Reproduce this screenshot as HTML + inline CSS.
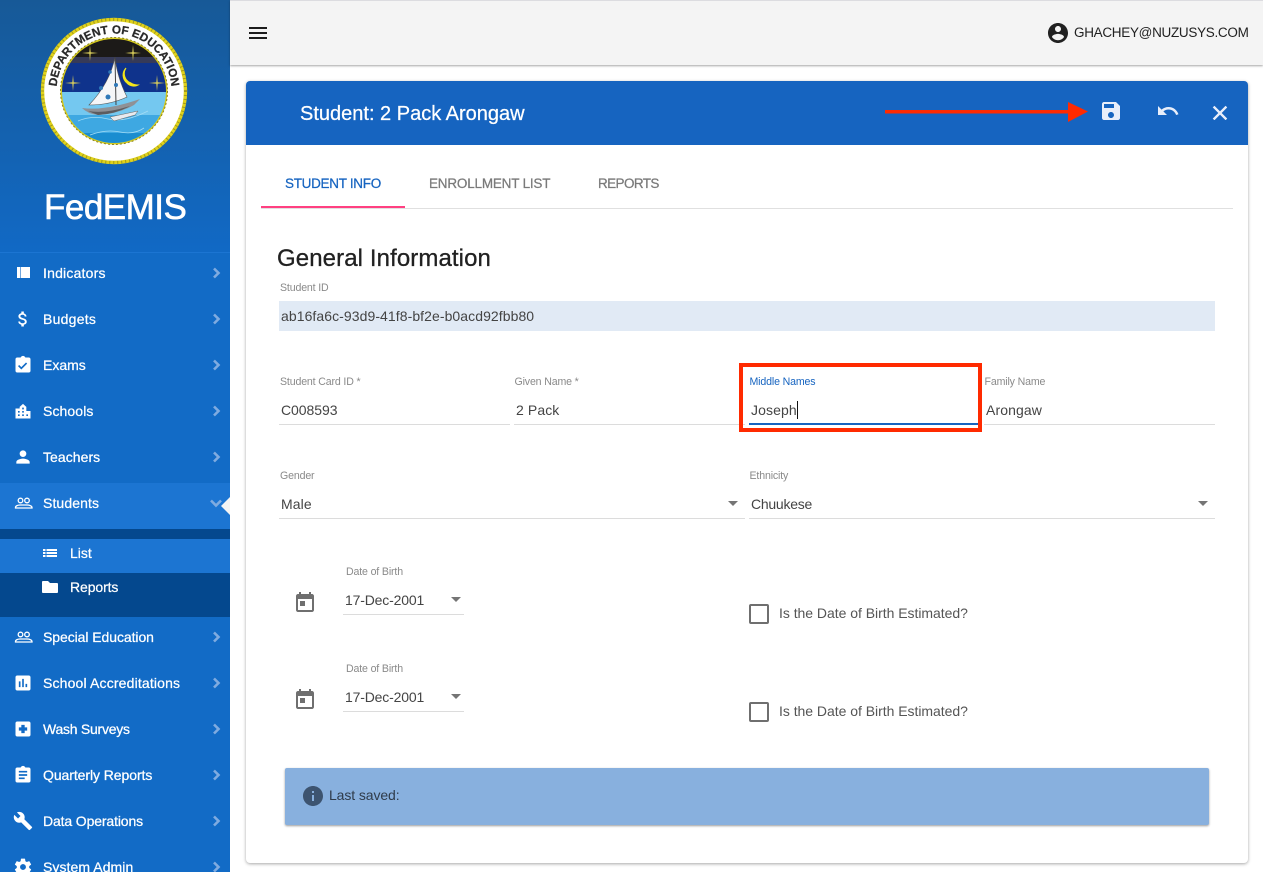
<!DOCTYPE html>
<html><head><meta charset="utf-8"><style>
html,body{margin:0;padding:0;width:1263px;height:872px;overflow:hidden;background:#fff;font-family:"Liberation Sans",sans-serif;color:#333}
.a{position:absolute}
.t{position:absolute;white-space:nowrap;line-height:1}
#side{left:0;top:0;width:230px;height:872px;background:#126bc6;overflow:hidden}
.nav{position:absolute;left:43px;color:#fff;font-size:14px;line-height:16px;white-space:nowrap;letter-spacing:0;-webkit-text-stroke:.25px #fff}
.ic{position:absolute;left:14px;width:20px;height:20px;fill:#fff}
.ch{position:absolute;left:209px;width:14px;height:14px;fill:none;stroke:#7fabe0;stroke-width:2.6}
.lb{position:absolute;font-size:10.6px;color:#8a8a8a;line-height:12px;white-space:nowrap;letter-spacing:-.15px}
.v{position:absolute;font-size:14px;color:#444;line-height:16px;white-space:nowrap;letter-spacing:.1px}
.u{position:absolute;height:1px;background:#dcdcdc}
.ar{position:absolute;width:0;height:0;border-left:5px solid transparent;border-right:5px solid transparent;border-top:5px solid #757575}
.cb{position:absolute;left:749px;width:16px;height:16px;border:2px solid #6f6f6f;border-radius:2px}
.tab{position:absolute;white-space:nowrap;font-size:13.5px;line-height:16px;color:#7a7a7a;-webkit-text-stroke:.25px currentColor}
</style></head><body>
<div id="side" class="a">
<div class="a" style="left:0;top:0;width:230px;height:252px;background:linear-gradient(#175997,#1169c5)"></div>
<div class="a" style="left:0;top:252px;width:230px;height:1px;background:#1c75d2"></div>
<svg class="a" style="left:38px;top:15px" width="152" height="152" viewBox="0 0 152 152">
<defs>
<path id="tp" d="M76 133.500A57.500 57.500 0 1 1 76.010 133.500"/>
<path id="bp" d="M76 8.500A67.500 67.500 0 1 0 75.990 8.500"/>
<clipPath id="c"><circle cx="76" cy="76" r="52"/></clipPath>
</defs>
<circle cx="76" cy="76" r="71.500" fill="#fff" stroke="#e0d21a" stroke-width="3.400"/>
<circle cx="76" cy="76" r="71.500" fill="none" stroke="#7f7a22" stroke-width="3" stroke-dasharray="1 3" opacity=".65"/>
<circle cx="76" cy="76" r="53.500" fill="#d7cb1e" stroke="#8a8420" stroke-width="1" stroke-dasharray="2 2"/>
<g clip-path="url(#c)">
<rect x="20" y="20" width="112" height="22" fill="#1c1a18"/>
<rect x="20" y="42" width="112" height="6" fill="#363a58"/>
<rect x="20" y="48" width="112" height="30" fill="#0f338c"/>
<rect x="20" y="77" width="112" height="60" fill="#74c8f0"/>
<rect x="20" y="100" width="112" height="20" fill="#3ea8e2"/>
<rect x="20" y="118" width="112" height="20" fill="#1a8dd0"/>
<path d="M40 106q14-6 30-2t40-8M52 120q16-6 30-3t24-4" fill="none" stroke="#a3dcf5" stroke-width=".8"/>
<g fill="#d9cd5a"><path d="M52 30l.7 7.300 7.300.7-7.300.7-.7 7.300-.7-7.300-7.300-.7 7.300-.7z"/><path d="M95 30l.7 7.300 7.300.7-7.300.7-.7 7.300-.7-7.300-7.300-.7 7.300-.7z"/><path d="M35 60l.7 7.300 7.300.7-7.300.7-.7 7.300-.7-7.300-7.300-.7 7.300-.7z"/><path d="M119 60l.7 7.300 7.300.7-7.300.7-.7 7.300-.7-7.300-7.300-.7 7.300-.7z"/></g>
<path d="M88 53a10 10 0 0 0 1 15a9 9 0 0 0 11 2a14 14 0 0 1-7-2a10 10 0 0 1-5-15z" fill="#f3e61a" stroke="#f3e61a" stroke-width="1"/>
<path d="M77 42Q72 68 51 90Q72 90 89 82Q79 62 77 42z" fill="#f5f6f8" stroke="#555" stroke-width=".6"/>
<path d="M77 42l1 48" stroke="#444" stroke-width="1"/>
<path d="M44 93Q68 96 102 84L96 90Q80 99 60 100Q50 99 44 93z" fill="#8f9196"/>
<path d="M50 96Q68 99 92 91Q78 99 60 100z" fill="#5c5c60"/>
<path d="M72 102L100 96L97 100L76 106z" fill="#e8eaee" stroke="#666" stroke-width=".5"/>
<g fill="#2f78b8"><circle cx="72" cy="57" r="1.800"/><circle cx="63" cy="73" r="2"/><circle cx="78" cy="70" r="2"/><circle cx="70" cy="82" r="2.500"/></g>
</g>
<text font-family="Liberation Sans,sans-serif" font-size="11.700" font-weight="700" fill="#2a2a2a" stroke="#2a2a2a" stroke-width=".25"><textPath href="#tp" startOffset="50%" text-anchor="middle">DEPARTMENT OF EDUCATION</textPath></text>
<text font-family="Liberation Sans,sans-serif" font-size="11.700" font-weight="700" fill="#2a2a2a" stroke="#2a2a2a" stroke-width=".25"><textPath href="#bp" startOffset="50%" text-anchor="middle">NATIONAL GOVERNMENT</textPath></text>
</svg>
<div class="t" style="left:44px;top:188px;font-size:35px;line-height:40px;color:#fff;letter-spacing:-.5px;-webkit-text-stroke:.6px #fff">FedEMIS</div>

<div class="a" style="left:0;top:483px;width:230px;height:46px;background:#1c75d2"></div>
<div class="a" style="left:0;top:529px;width:230px;height:88px;background:#04488e"></div>
<div class="a" style="left:0;top:539px;width:230px;height:34px;background:#1c75d2"></div>
<div class="a" style="left:221px;top:497px;width:0;height:0;border-top:9px solid transparent;border-bottom:9px solid transparent;border-right:9px solid #f4f4f4"></div>

<svg class="ic" style="top:263px" viewBox="0 0 20 20"><path d="M3 4h3v11H3zM6.600 4H16v11H6.600z"/></svg>
<div class="nav" style="top:265px;letter-spacing:.2px">Indicators</div>
<svg class="ic" style="top:309px;left:13px" viewBox="0 0 24 24"><path d="M11.800 10.900c-2.270-.59-3-1.200-3-2.150 0-1.090 1.010-1.850 2.700-1.850 1.780 0 2.440.85 2.500 2.100h2.210c-.07-1.720-1.120-3.300-3.210-3.810V3h-3v2.160c-1.940.42-3.500 1.680-3.500 3.610 0 2.310 1.910 3.460 4.700 4.130 2.500.6 3 1.480 3 2.410 0 .69-.49 1.790-2.700 1.790-2.060 0-2.870-.92-2.980-2.100h-2.200c.12 2.190 1.760 3.420 3.680 3.830V21h3v-2.150c1.950-.37 3.500-1.500 3.500-3.550 0-2.840-2.430-3.810-4.700-4.400z"/></svg>
<div class="nav" style="top:311px;letter-spacing:.25px">Budgets</div>
<svg class="ic" style="top:355px;left:13px" viewBox="0 0 24 24"><path d="M19 3h-4.180C14.400 1.840 13.300 1 12 1s-2.400.84-2.820 2H5c-1.100 0-2 .9-2 2v14c0 1.100.9 2 2 2h14c1.100 0 2-.9 2-2V5c0-1.100-.9-2-2-2zm-2 7.400l-7 7-4-4 1.400-1.400 2.600 2.600 5.600-5.600z"/></svg>
<div class="nav" style="top:357px">Exams</div>
<svg class="ic" style="top:401px;left:13px" viewBox="0 0 24 24" fill-rule="evenodd"><path d="M3 21V9h5V7l4-3.500L16 7v5h5v9zM6 12v2h2v-2zm0 4v2h2v-2zm5-8v2h2V8zm0 4v2h2v-2zm0 4v2h2v-2zm5 0v2h2v-2z"/></svg>
<div class="nav" style="top:403px;letter-spacing:.1px">Schools</div>
<svg class="ic" style="top:447px;left:13px" viewBox="0 0 24 24"><path d="M12 12c2.210 0 4-1.790 4-4s-1.790-4-4-4-4 1.790-4 4 1.790 4 4 4zm0 2c-2.670 0-8 1.340-8 4v2h16v-2c0-2.660-5.330-4-8-4z"/></svg>
<div class="nav" style="top:449px;letter-spacing:.05px">Teachers</div>
<svg class="a" style="left:14px;top:496px" width="20" height="14" viewBox="0 0 20 14"><g fill="none" stroke="#fff" stroke-width="1.300"><circle cx="6.500" cy="4.500" r="2.300"/><circle cx="13" cy="4.500" r="2.300"/><path d="M1.500 11.500c0-1.500 2-2.500 4.500-2.500h7c2.500 0 5 1 5 2.500v.5H1.500z"/></g></svg>
<div class="nav" style="top:495px;letter-spacing:.1px">Students</div>
<svg class="a" style="left:42px;top:545px;fill:#fff" width="16" height="16" viewBox="0 0 16 16"><path d="M1 4h2.500v2H1zM4.500 4H15v2H4.500zM1 7h2.500v2H1zM4.500 7H15v2H4.500zM1 10h2.500v2H1zM4.500 10H15v2H4.500z"/></svg>
<div class="nav" style="left:70px;top:545px">List</div>
<svg class="a" style="left:41px;top:578px;fill:#fff" width="18" height="18" viewBox="0 0 18 18"><path d="M1 4c0-.6.4-1 1-1h5l2 2h7c.6 0 1 .4 1 1v8c0 .6-.4 1-1 1H2c-.6 0-1-.4-1-1z"/></svg>
<div class="nav" style="left:70px;top:579px;letter-spacing:-.1px">Reports</div>
<svg class="a" style="left:14px;top:630px" width="20" height="14" viewBox="0 0 20 14"><g fill="none" stroke="#fff" stroke-width="1.300"><circle cx="6.500" cy="4.500" r="2.300"/><circle cx="13" cy="4.500" r="2.300"/><path d="M1.500 11.500c0-1.500 2-2.500 4.500-2.500h7c2.500 0 5 1 5 2.500v.5H1.500z"/></g></svg>
<div class="nav" style="top:629px;letter-spacing:-.07px">Special Education</div>
<svg class="ic" style="top:673px;left:13px" viewBox="0 0 24 24"><path d="M19 3H5c-1.100 0-2 .9-2 2v14c0 1.100.9 2 2 2h14c1.100 0 2-.9 2-2V5c0-1.100-.9-2-2-2zM9 17H7v-7h2zm4 0h-2V7h2zm4 0h-2v-4h2z"/></svg>
<div class="nav" style="top:675px;letter-spacing:.16px">School Accreditations</div>
<svg class="ic" style="top:719px;left:13px" viewBox="0 0 24 24"><path d="M19 3H5c-1.100 0-2 .9-2 2v14c0 1.100.9 2 2 2h14c1.100 0 2-.9 2-2V5c0-1.100-.9-2-2-2zm-2 11h-3v3h-4v-3H7v-4h3V7h4v3h3z"/></svg>
<div class="nav" style="top:721px;letter-spacing:-.25px">Wash Surveys</div>
<svg class="ic" style="top:765px;left:13px" viewBox="0 0 24 24"><path d="M19 3h-4.180C14.400 1.840 13.300 1 12 1s-2.400.84-2.820 2H5c-1.100 0-2 .9-2 2v14c0 1.100.9 2 2 2h14c1.100 0 2-.9 2-2V5c0-1.100-.9-2-2-2zm-5 14H7v-2h7zm3-4H7v-2h10zm0-4H7V7h10z"/></svg>
<div class="nav" style="top:767px;letter-spacing:-.07px">Quarterly Reports</div>
<svg class="ic" style="top:811px;left:13px" viewBox="0 0 24 24"><path d="M22.700 19l-9.100-9.100c.9-2.300.4-5-1.500-6.900-2-2-5-2.400-7.400-1.300L9 6 6 9 1.600 4.700C.4 7.100.9 10.100 2.900 12.100c1.900 1.900 4.600 2.400 6.900 1.500l9.100 9.100c.4.400 1 .4 1.400 0l2.300-2.300c.5-.4.5-1.100.1-1.400z"/></svg>
<div class="nav" style="top:813px;letter-spacing:-.13px">Data Operations</div>
<svg class="ic" style="top:857px;left:13px" viewBox="0 0 24 24"><path d="M19.430 12.980c.04-.32.07-.64.07-.98s-.03-.66-.07-.98l2.110-1.650c.19-.15.24-.42.12-.64l-2-3.460c-.12-.22-.39-.3-.61-.22l-2.490 1c-.52-.4-1.080-.73-1.690-.98l-.38-2.650C14.460 2.180 14.250 2 14 2h-4c-.25 0-.46.18-.49.42l-.38 2.650c-.61.25-1.170.59-1.690.98l-2.490-1c-.23-.09-.49 0-.61.22l-2 3.460c-.13.22-.07.49.12.64l2.110 1.650c-.04.32-.07.65-.07.98s.03.66.07.98l-2.110 1.650c-.19.15-.24.42-.12.64l2 3.460c.12.22.39.3.61.22l2.490-1c.52.4 1.080.73 1.690.98l.38 2.650c.03.24.24.42.49.42h4c.25 0 .46-.18.49-.42l.38-2.650c.61-.25 1.170-.59 1.690-.98l2.490 1c.23.09.49 0 .61-.22l2-3.460c.12-.22.07-.49-.12-.64zM12 15.500c-1.930 0-3.500-1.570-3.500-3.500s1.570-3.500 3.500-3.500 3.500 1.570 3.500 3.500-1.570 3.500-3.500 3.500z"/></svg>
<div class="nav" style="top:859px;letter-spacing:.07px">System Admin</div>

<svg class="ch" style="top:266px" viewBox="0 0 14 14"><path d="M5 2.500L9.500 7 5 11.500"/></svg>
<svg class="ch" style="top:312px" viewBox="0 0 14 14"><path d="M5 2.500L9.500 7 5 11.500"/></svg>
<svg class="ch" style="top:358px" viewBox="0 0 14 14"><path d="M5 2.500L9.500 7 5 11.500"/></svg>
<svg class="ch" style="top:404px" viewBox="0 0 14 14"><path d="M5 2.500L9.500 7 5 11.500"/></svg>
<svg class="ch" style="top:450px" viewBox="0 0 14 14"><path d="M5 2.500L9.500 7 5 11.500"/></svg>
<svg class="ch" style="top:496px" viewBox="0 0 14 14"><path d="M2 4.500l5 5 5-5"/></svg>
<svg class="ch" style="top:630px" viewBox="0 0 14 14"><path d="M5 2.500L9.500 7 5 11.500"/></svg>
<svg class="ch" style="top:676px" viewBox="0 0 14 14"><path d="M5 2.500L9.500 7 5 11.500"/></svg>
<svg class="ch" style="top:722px" viewBox="0 0 14 14"><path d="M5 2.500L9.500 7 5 11.500"/></svg>
<svg class="ch" style="top:768px" viewBox="0 0 14 14"><path d="M5 2.500L9.500 7 5 11.500"/></svg>
<svg class="ch" style="top:814px" viewBox="0 0 14 14"><path d="M5 2.500L9.500 7 5 11.500"/></svg>
<svg class="ch" style="top:860px" viewBox="0 0 14 14"><path d="M5 2.500L9.500 7 5 11.500"/></svg>
</div>

<!-- top bar -->
<div class="a" style="left:230px;top:0;width:1033px;height:65px;background:#f4f4f4;border-top:1px solid #dcdce0;box-sizing:border-box;box-shadow:0 1px 2px rgba(0,0,0,.35)"></div>
<svg class="a" style="left:248px;top:25px" width="20" height="16" viewBox="0 0 20 16"><path d="M1 2h18v2H1zM1 7h18v2H1zM1 12h18v2H1z" fill="#1c1c1c"/></svg>
<svg class="a" style="left:1046px;top:21px" width="24" height="24" viewBox="0 0 24 24"><path fill="#212121" d="M12 2C6.480 2 2 6.480 2 12s4.480 10 10 10 10-4.480 10-10S17.520 2 12 2zm0 3c1.660 0 3 1.340 3 3s-1.340 3-3 3-3-1.340-3-3 1.340-3 3-3zm0 14.200c-2.500 0-4.710-1.280-6-3.220.03-1.990 4-3.080 6-3.080s5.970 1.090 6 3.080c-1.290 1.940-3.500 3.220-6 3.220z"/></svg>
<div class="t" style="left:1074px;top:25px;font-size:13.5px;line-height:16px;color:#212121;letter-spacing:-.3px">GHACHEY@NUZUSYS.COM</div>

<!-- card -->
<div class="a" style="left:246px;top:81px;width:1002px;height:782px;background:#fff;border-radius:4px;box-shadow:0 1px 3px rgba(0,0,0,.35)"></div>
<div class="a" style="left:246px;top:81px;width:1002px;height:64px;background:#1664c0;border-radius:4px 4px 0 0"></div>
<div class="t" style="left:300px;top:103px;font-size:20px;line-height:23px;color:#fff;letter-spacing:0;-webkit-text-stroke:.25px #fff">Student: 2 Pack Arongaw</div>
<svg class="a" style="left:885px;top:100px" width="205" height="24" viewBox="0 0 205 24"><path d="M0 10h184v3.500H0z" fill="#ff2a00"/><path d="M183 2L203 11.500L183 22z" fill="#ff2a00"/></svg>
<svg class="a" style="left:1099px;top:99px" width="24" height="24" viewBox="0 0 24 24"><path fill="#e8eefa" d="M17 3H5c-1.110 0-2 .9-2 2v14c0 1.100.89 2 2 2h14c1.100 0 2-.9 2-2V7zm-5 16c-1.660 0-3-1.340-3-3s1.340-3 3-3 3 1.340 3 3-1.340 3-3 3zm3-10H5V5h10z"/></svg>
<svg class="a" style="left:1156px;top:99px" width="24" height="24" viewBox="0 0 24 24"><path fill="#e8eefa" d="M12.500 8c-2.650 0-5.050.99-6.900 2.600L2 7v9h9l-3.620-3.620c1.390-1.160 3.160-1.880 5.120-1.880 3.540 0 6.550 2.310 7.600 5.500l2.370-.78C21.080 11.030 17.150 8 12.500 8z"/></svg>
<svg class="a" style="left:1208px;top:101px" width="24" height="24" viewBox="0 0 24 24"><path fill="#e8eefa" stroke="#e8eefa" stroke-width=".5" d="M19 6.410L17.590 5 12 10.590 6.410 5 5 6.410 10.590 12 5 17.590 6.410 19 12 13.410 17.590 19 19 17.590 13.410 12z"/></svg>

<!-- tabs -->
<div class="tab" style="left:285px;top:176px;color:#1664c0;letter-spacing:-.3px">STUDENT INFO</div>
<div class="tab" style="left:429px;top:176px;letter-spacing:-.2px">ENROLLMENT LIST</div>
<div class="tab" style="left:598px;top:176px;letter-spacing:-.6px">REPORTS</div>
<div class="a" style="left:261px;top:208px;width:972px;height:1px;background:#e0e0e0"></div>
<div class="a" style="left:261px;top:206px;width:144px;height:2px;background:#ff4081"></div>

<div class="t" style="left:277px;top:245px;font-size:24px;line-height:28px;color:#212121;letter-spacing:.1px;-webkit-text-stroke:.3px #212121">General Information</div>
<div class="lb" style="left:280px;top:282px">Student ID</div>
<div class="a" style="left:279px;top:301px;width:936px;height:30px;background:#e1eaf5"></div>
<div class="v" style="left:281px;top:308px;letter-spacing:.07px">ab16fa6c-93d9-41f8-bf2e-b0acd92fbb80</div>

<div class="lb" style="left:280px;top:376px">Student Card ID *</div>
<div class="v" style="left:281px;top:402px;letter-spacing:-.05px">C008593</div>
<div class="u" style="left:279px;top:424px;width:231px"></div>
<div class="lb" style="left:514.500px;top:376px">Given Name *</div>
<div class="v" style="left:516px;top:402px">2 Pack</div>
<div class="u" style="left:514px;top:424px;width:231px"></div>
<div class="lb" style="left:749.500px;top:376px;color:#1664c0">Middle Names</div>
<div class="v" style="left:751px;top:402px">Joseph</div>
<div class="a" style="left:797px;top:401px;width:1px;height:18px;background:#111"></div>
<div class="a" style="left:749px;top:423px;width:229px;height:2px;background:#1664c0"></div>
<div class="a" style="left:739px;top:363px;width:243px;height:69px;box-sizing:border-box;border:4px solid #ff2a00"></div>
<div class="lb" style="left:984.500px;top:376px">Family Name</div>
<div class="v" style="left:986px;top:402px">Arongaw</div>
<div class="u" style="left:984px;top:424px;width:231px"></div>

<div class="lb" style="left:280px;top:470px">Gender</div>
<div class="v" style="left:281px;top:496px">Male</div>
<div class="ar" style="left:728px;top:501px"></div>
<div class="u" style="left:279px;top:518px;width:466px"></div>
<div class="lb" style="left:749.500px;top:470px">Ethnicity</div>
<div class="v" style="left:751px;top:496px;letter-spacing:-.25px">Chuukese</div>
<div class="ar" style="left:1198px;top:501px"></div>
<div class="u" style="left:749px;top:518px;width:466px"></div>

<svg class="a" style="left:293px;top:591px" width="24" height="24" viewBox="0 0 24 24"><path fill="#6f6f6f" d="M19 3h-1V1h-2v2H8V1H6v2H5c-1.110 0-2 .9-2 2v14c0 1.100.89 2 2 2h14c1.100 0 2-.9 2-2V5c0-1.100-.9-2-2-2zm0 16H5V8h14zM7 10h5v5H7z"/></svg>
<div class="lb" style="left:346px;top:566px">Date of Birth</div>
<div class="v" style="left:345px;top:592px;letter-spacing:-.17px">17-Dec-2001</div>
<div class="ar" style="left:451px;top:597px"></div>
<div class="u" style="left:343px;top:614px;width:121px"></div>

<svg class="a" style="left:293px;top:688px" width="24" height="24" viewBox="0 0 24 24"><path fill="#6f6f6f" d="M19 3h-1V1h-2v2H8V1H6v2H5c-1.110 0-2 .9-2 2v14c0 1.100.89 2 2 2h14c1.100 0 2-.9 2-2V5c0-1.100-.9-2-2-2zm0 16H5V8h14zM7 10h5v5H7z"/></svg>
<div class="lb" style="left:346px;top:663px">Date of Birth</div>
<div class="v" style="left:345px;top:689px;letter-spacing:-.17px">17-Dec-2001</div>
<div class="ar" style="left:451px;top:694px"></div>
<div class="u" style="left:343px;top:711px;width:121px"></div>

<div class="cb" style="top:604px"></div>
<div class="v" style="left:779px;top:605px;color:#555;letter-spacing:-.03px">Is the Date of Birth Estimated?</div>
<div class="cb" style="top:702px"></div>
<div class="v" style="left:779px;top:703px;color:#555;letter-spacing:-.03px">Is the Date of Birth Estimated?</div>

<div class="a" style="left:285px;top:768px;width:924px;height:57px;background:#88b0de;border-radius:2px;box-shadow:0 1px 2px rgba(0,0,0,.4)"></div>
<svg class="a" style="left:301px;top:784px" width="24" height="24" viewBox="0 0 24 24"><path fill="#3d5470" d="M12 2C6.480 2 2 6.480 2 12s4.480 10 10 10 10-4.480 10-10S17.520 2 12 2zm1 15h-2v-6h2zm0-8h-2V7h2z"/></svg>
<div class="v" style="left:329px;top:787px;color:#2f3b4a;letter-spacing:-.1px">Last saved:</div>
</body></html>
